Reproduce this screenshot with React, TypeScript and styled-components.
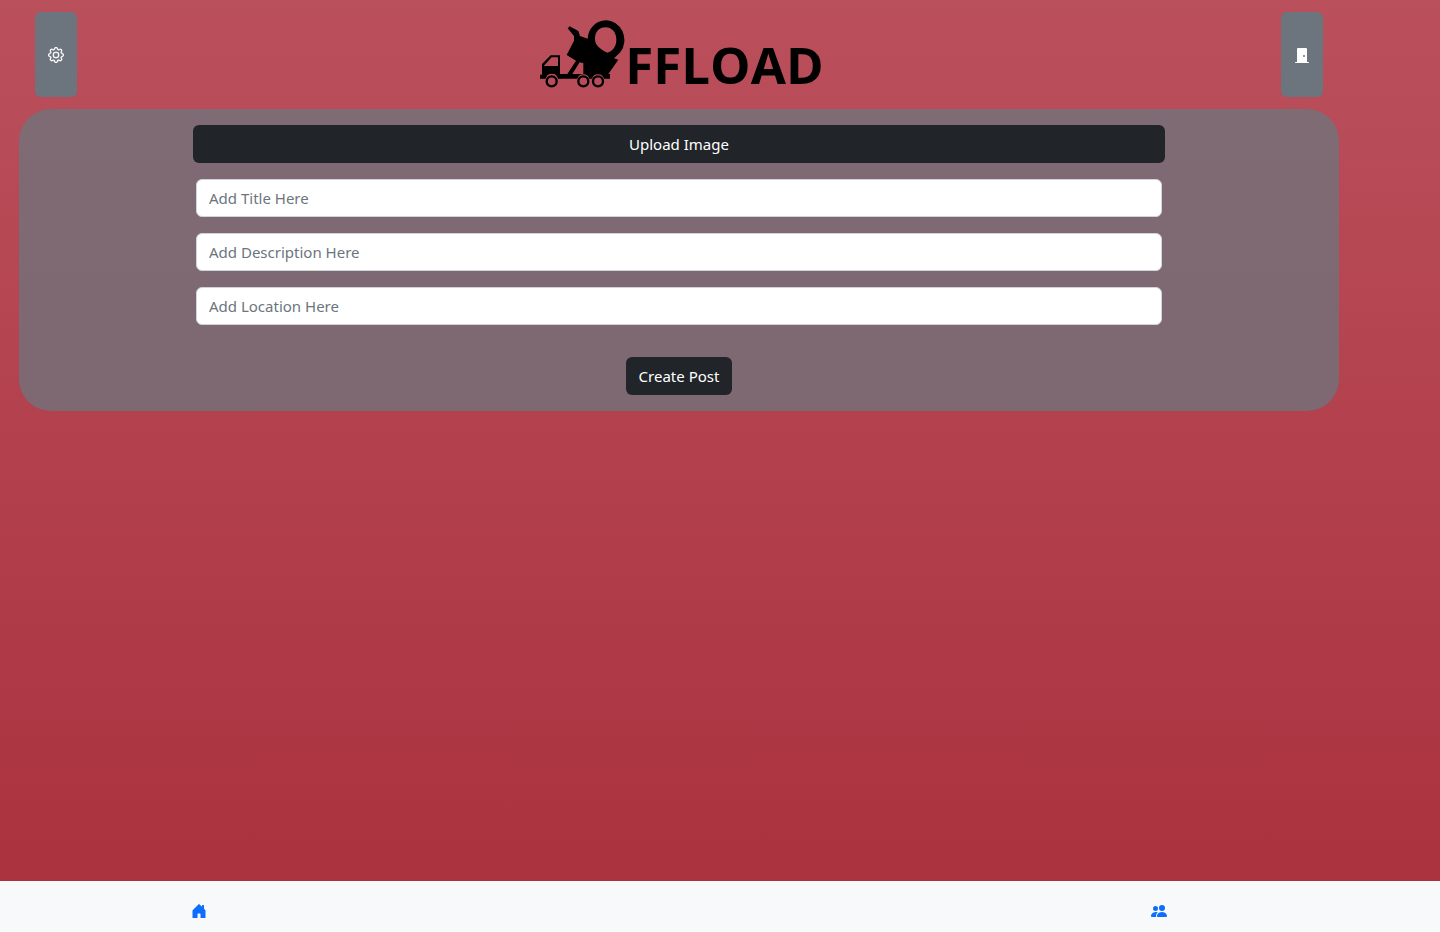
import React from "react";
import styled, { createGlobalStyle } from "styled-components";
import { BsDoorClosedFill, BsGear, BsHouseDoorFill, BsPeopleFill } from "react-icons/bs";

const GlobalStyle = createGlobalStyle`
  *, *::before, *::after { box-sizing: border-box; }
  body {
    margin: 0;
    font-family: "Segoe UI", "Noto Sans", "Open Sans", sans-serif;
    font-size: 15px;
    line-height: 24px;
  }
`;

const Page = styled.div`
  display: flex;
  flex-direction: column;
  min-height: 100vh;
  background: linear-gradient(#ba505c, #aa303d);
`;

const Main = styled.main`
  flex: 1;
  padding: 0 101px 0 19px;
`;

const Header = styled.header`
  display: flex;
  justify-content: space-between;
  padding: 12px 16px;
`;

const IconButton = styled.button`
  display: flex;
  align-items: center;
  justify-content: center;
  width: 42px;
  height: 85px;
  padding: 0;
  border: 0;
  border-radius: 6px;
  background: #6c757d;
  color: #fff;
  font-size: 16px;
  cursor: pointer;
`;

const Logo = styled.div`
  display: flex;
  align-items: flex-start;
  padding: 7px 0 0 6px;
  color: #000;
`;

const Wordmark = styled.span`
  padding-top: 13px;
  font-family: "Open Sans", sans-serif;
  font-size: 51px;
  font-weight: 700;
  line-height: 64px;
`;

const Card = styled.form`
  display: flex;
  flex-direction: column;
  align-items: center;
  gap: 16px;
  padding: 16px 174px;
  border-radius: 32px;
  background: rgba(108, 117, 125, 0.75);
`;

const DarkButton = styled.button<{ $wide?: boolean }>`
  width: ${(p) => (p.$wide ? "100%" : "106px")};
  height: 38px;
  margin-top: ${(p) => (p.$wide ? "0" : "16px")};
  padding: 0;
  border: 0;
  border-radius: 6px;
  background: #212529;
  color: #fff;
  font: inherit;
  cursor: pointer;
`;

const Field = styled.label`
  display: block;
  width: 100%;
  padding: 0 3px;
`;

const TextInput = styled.input`
  display: block;
  width: 100%;
  height: 38px;
  padding: 0 12px;
  border: 1px solid #ced4da;
  border-radius: 6px;
  background: #fff;
  color: #212529;
  font: inherit;

  &::placeholder {
    color: #6c757d;
    opacity: 1;
  }
`;

const Footer = styled.nav`
  display: flex;
  justify-content: space-between;
  height: 51px;
  padding: 22px 273px 0 191px;
  background: #f8f9fa;
`;

const NavLink = styled.a`
  display: flex;
  height: 16px;
  color: #0d6efd;
  font-size: 16px;
`;

function TruckMark() {
  return (
    <svg width="85" height="69" viewBox="30 25 255 207" aria-hidden="true">
      <path
        fillRule="evenodd"
        d="M36 160 62 134H90V190H112L138 150 110 133 132 90V76L113 53 119 47 145 61 150 76 173 84A55 58 0 0 1 227 29 55 59 0 0 1 271 125L252 143 265 147 235 190H240V204H222A19 19 0 0 0 186 204H178A19 19 0 0 0 142 204H84A19 19 0 0 0 47 204H30V192H36ZM41 166H84V140H65ZM149 155 127 190H160V158ZM226 50C208 50 195 63 195 84 195 105 211 115 232 126 248 121 259 108 259 87 259 64 245 50 226 50Z"
      />
      <g fill="none" stroke="currentColor" strokeWidth="7">
        <circle cx="65" cy="212" r="15" />
        <circle cx="160" cy="212" r="15" />
        <circle cx="204" cy="212" r="15" />
      </g>
    </svg>
  );
}

const fields = ["Title", "Description", "Location"];

export default function App() {
  return (
    <Page>
      <GlobalStyle />
      <Main>
        <Header>
          <IconButton type="button" aria-label="Settings">
            <BsGear strokeWidth={0.3} />
          </IconButton>
          <Logo>
            <TruckMark />
            <Wordmark>FFLOAD</Wordmark>
          </Logo>
          <IconButton type="button" aria-label="Log out">
            <BsDoorClosedFill />
          </IconButton>
        </Header>
        <Card onSubmit={(e) => e.preventDefault()}>
          <DarkButton type="button" $wide>
            Upload Image
          </DarkButton>
          {fields.map((name) => (
            <Field key={name}>
              <TextInput
                type="text"
                name={name.toLowerCase()}
                aria-label={name}
                placeholder={`Add ${name} Here`}
              />
            </Field>
          ))}
          <DarkButton type="submit">Create Post</DarkButton>
        </Card>
      </Main>
      <Footer>
        <NavLink href="#home" aria-label="Home">
          <BsHouseDoorFill />
        </NavLink>
        <NavLink href="#people" aria-label="People">
          <BsPeopleFill />
        </NavLink>
      </Footer>
    </Page>
  );
}
